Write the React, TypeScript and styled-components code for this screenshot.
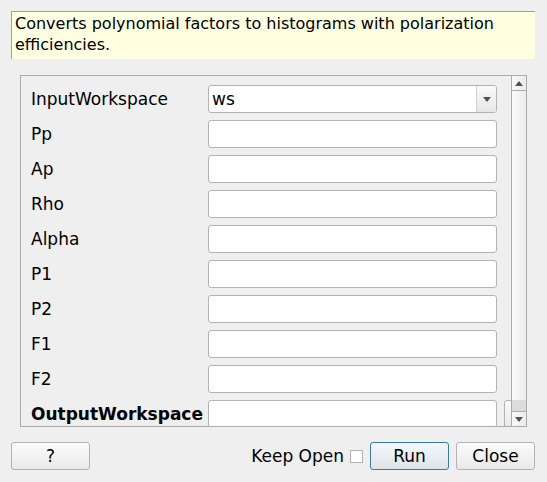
import React from 'react';
import styled, { createGlobalStyle } from 'styled-components';

const GlobalStyle = createGlobalStyle`
  html, body {
    margin: 0;
    padding: 0;
    background: #efefef;
  }
  body {
    font-family: "DejaVu Sans", sans-serif;
    font-size: 16px;
    color: #000;
  }
`;

const Dialog = styled.div`
  width: 547px;
  height: 482px;
  box-sizing: border-box;
  padding: 11px 12px 0 11px;
  display: flex;
  flex-direction: column;
`;

const Description = styled.div`
  height: 48px;
  box-sizing: border-box;
  background: #ffffe1;
  border-top: 1px solid #a0a0a0;
  border-left: 1px solid #a0a0a0;
  padding: 1px 3px;
  line-height: 21px;
`;

const ScrollArea = styled.div`
  margin: 16px 8px 0 9px;
  height: 352px;
  box-sizing: border-box;
  border: 1px solid #ababab;
  display: flex;
`;

const Content = styled.div`
  flex: 1;
  overflow: hidden;
  padding: 9px 0 0 10px;
  display: grid;
  grid-template-columns: 170px 289px 20px;
  grid-auto-rows: 28px;
  row-gap: 7px;
  column-gap: 7px;
  align-content: start;
  align-items: center;
`;

const Label = styled.div<{ $bold?: boolean }>`
  grid-column: 1;
  font-size: 17px;
  font-weight: ${p => (p.$bold ? 'bold' : 'normal')};
  white-space: nowrap;
`;

const Field = styled.div`
  grid-column: 2;
  height: 28px;
  box-sizing: border-box;
  background: #fff;
  border: 1px solid #b3b3b3;
  border-radius: 3px;
  display: flex;
  align-items: center;
  padding-left: 4px;
`;

const Combo = styled(Field)`
  padding-left: 0;
`;

const ComboText = styled.div`
  flex: 1;
  padding-left: 3px;
  font-size: 17px;
`;

const ComboArrow = styled.div`
  width: 19px;
  height: 100%;
  border-left: 1px solid #d0d0d0;
  background: linear-gradient(#fafafa, #e6e6e6);
  border-radius: 0 3px 3px 0;
  display: flex;
  align-items: center;
  justify-content: center;
`;

const BrowseButton = styled.div`
  grid-column: 3;
  height: 28px;
  box-sizing: border-box;
  border: 1px solid #b3b3b3;
  border-radius: 3px;
  background: linear-gradient(#fafafa, #e8e8e8);
`;

const ScrollBar = styled.div`
  width: 14px;
  border-left: 1px solid #ababab;
  display: flex;
  flex-direction: column;
`;

const ArrowButton = styled.div<{ $down?: boolean }>`
  height: 14px;
  background: linear-gradient(90deg, #fafafa, #ececec);
  border-bottom: ${p => (p.$down ? 'none' : '1px solid #ababab')};
  border-top: ${p => (p.$down ? '1px solid #ababab' : 'none')};
  display: flex;
  align-items: center;
  justify-content: center;
`;

const Thumb = styled.div`
  flex: 1;
  background: linear-gradient(90deg, #fbfbfb, #ececec);
`;

const Groove = styled.div`
  height: 11px;
  background: #dcdcdc;
`;

const ButtonBar = styled.div`
  margin-top: 15px;
  display: flex;
  align-items: center;
`;

const Button = styled.button<{ $default?: boolean }>`
  width: 79px;
  height: 28px;
  box-sizing: border-box;
  margin: 0;
  padding: 0;
  font-family: "DejaVu Sans", sans-serif;
  font-size: 17px;
  color: #000;
  border-radius: 3px;
  border: 1px solid ${p => (p.$default ? '#3b79ad' : '#b3b3b3')};
  background: ${p =>
    p.$default
      ? 'linear-gradient(#f6f8fa, #dde3e8)'
      : 'linear-gradient(#fbfbfb, #e9e9e9)'};
`;

const Spacer = styled.div`
  flex: 1;
`;

const KeepOpen = styled.label`
  display: flex;
  align-items: center;
  gap: 6px;
  margin-right: 7px;
  font-size: 17px;
`;

const Check = styled.span`
  width: 11px;
  height: 11px;
  border: 1px solid #b3b3b3;
  background: #fff;
  display: inline-block;
`;

const ButtonGap = styled.div`
  width: 7px;
`;

const Tri = ({ up }: { up?: boolean }) => (
  <svg width="8" height="5" viewBox="0 0 8 5">
    <path d={up ? 'M0 5 L4 0 L8 5 Z' : 'M0 0 L8 0 L4 5 Z'} fill="#505050" />
  </svg>
);

const props = ['Pp', 'Ap', 'Rho', 'Alpha', 'P1', 'P2', 'F1', 'F2'];

export default function App() {
  return (
    <>
      <GlobalStyle />
      <Dialog>
        <Description>
          Converts polynomial factors to histograms with polarization efficiencies.
        </Description>
        <ScrollArea>
          <Content>
            <Label>InputWorkspace</Label>
            <Combo>
              <ComboText>ws</ComboText>
              <ComboArrow>
                <Tri />
              </ComboArrow>
            </Combo>
            {props.map(name => (
              <React.Fragment key={name}>
                <Label>{name}</Label>
                <Field />
              </React.Fragment>
            ))}
            <Label $bold>OutputWorkspace</Label>
            <Field />
            <BrowseButton />
          </Content>
          <ScrollBar>
            <ArrowButton>
              <Tri up />
            </ArrowButton>
            <Thumb />
            <Groove />
            <ArrowButton $down>
              <Tri />
            </ArrowButton>
          </ScrollBar>
        </ScrollArea>
        <ButtonBar>
          <Button>?</Button>
          <Spacer />
          <KeepOpen>
            Keep Open <Check />
          </KeepOpen>
          <Button $default>Run</Button>
          <ButtonGap />
          <Button>Close</Button>
        </ButtonBar>
      </Dialog>
    </>
  );
}
